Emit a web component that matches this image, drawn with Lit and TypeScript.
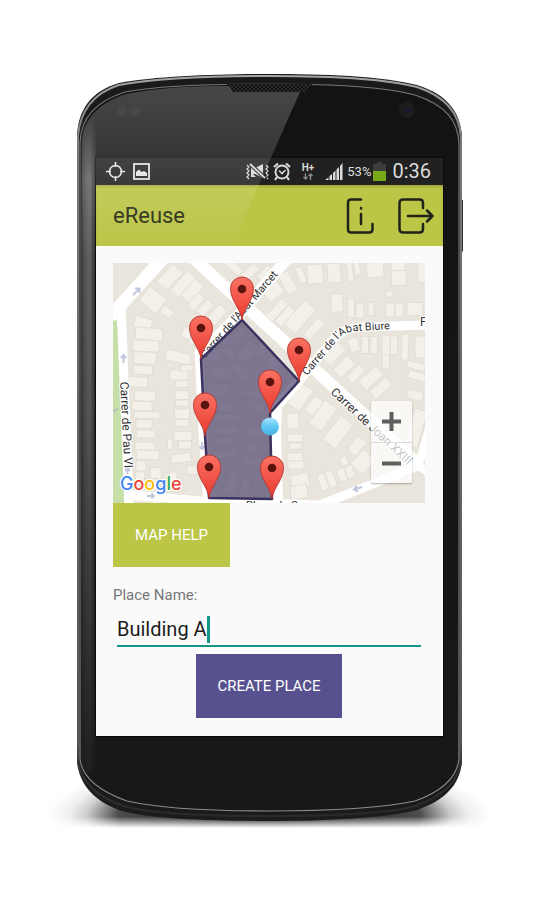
import { LitElement, html, css, svg } from "lit";
import { customElement, state } from "lit/decorators.js";

// x, y, width, height, rotation in degrees; centre based
type Lot = [number, number, number, number, number];

const LOTS: Lot[] = [
  [170, 277, 14, 24, 42], [183, 284, 11, 26, 42], [192, 291, 12, 22, 42], [153, 300, 22, 18, 38], [167, 312, 12, 8, 38],
  [196, 302, 9, 17, 42], [205, 308, 9, 16, 42], [216, 316, 11, 22, 42], [188, 334, 13, 11, 22], [196, 341, 13, 9, 22],
  [143, 323, 18, 11, 15], [149, 334, 27, 12, 6], [146, 346, 26, 11, 2], [145, 358, 22, 12, 2], [143, 370, 19, 9, 2],
  [178, 357, 25, 11, 12], [179, 375, 18, 10, 0], [182, 384, 12, 7, 0], [187, 368, 12, 6, 0], [138, 382, 19, 10, 2],
  [145, 396, 21, 10, 2], [142, 406, 20, 9, 2], [147, 415, 26, 7, 2], [144, 424, 16, 9, 2], [146, 434, 19, 8, 2],
  [145, 446, 20, 8, 2], [148, 455, 23, 9, 2], [141, 466, 10, 10, 0], [156, 473, 11, 11, 0], [140, 476, 9, 8, 0],
  [182, 395, 14, 9, 0], [182, 403, 13, 6, 0], [182, 414, 15, 10, 0], [182, 423, 14, 7, 0], [183, 436, 18, 9, 0],
  [185, 445, 13, 8, 0], [170, 444, 5, 10, 0], [181, 458, 20, 9, -8], [173, 477, 8, 10, 0], [192, 470, 10, 8, 0],
  [228, 340, 14, 12, 42], [240, 335, 10, 12, 42], [215, 355, 16, 12, 0], [230, 353, 15, 11, 42], [247, 352, 12, 22, 42],
  [221, 373, 22, 12, 0], [241, 371, 20, 10, 42], [218, 390, 20, 12, 0], [223, 407, 20, 9, 5], [228, 418, 24, 9, 0],
  [227, 430, 22, 8, 0], [224, 442, 18, 8, 0], [226, 454, 22, 9, 0], [251, 394, 18, 9, 25], [255, 406, 20, 8, 20],
  [252, 432, 18, 8, 0], [252, 448, 16, 8, 0], [253, 461, 18, 9, 0], [232, 483, 10, 20, 12], [245, 487, 9, 18, 12],
  [275, 362, 15, 16, 42], [262, 350, 9, 15, 42],
  [273, 291, 18, 15, -42], [288, 283, 11, 22, -28], [301, 275, 7, 17, -22], [315, 274, 16, 19, -4], [334, 273, 13, 19, -5],
  [350, 272, 6, 20, -8], [357, 268, 6, 14, -8], [375, 270, 17, 15, -5], [398, 266, 14, 9, 0], [399, 278, 15, 15, 0],
  [422, 272, 8, 20, 0], [277, 310, 9, 24, 42], [285, 316, 9, 22, 42], [300, 317, 15, 31, 42], [314, 329, 9, 22, 42],
  [337, 303, 12, 18, 0], [351, 308, 7, 19, 0], [360, 311, 8, 14, 0], [371, 309, 6, 13, 0], [389, 294, 7, 6, 0],
  [390, 310, 9, 14, 0], [399, 310, 8, 14, 0], [415, 309, 16, 13, 0],
  [354, 345, 10, 14, -20], [365, 345, 7, 17, 0], [374, 345, 7, 17, 0], [386, 345, 8, 20, 0], [394, 345, 7, 18, 0],
  [405, 347, 7, 26, 2], [420, 347, 10, 22, 0], [386, 362, 7, 14, 0], [333, 353, 22, 14, -45], [344, 367, 20, 12, -45],
  [356, 374, 18, 9, -45], [371, 378, 24, 12, -42], [381, 388, 22, 10, -42], [416, 366, 18, 7, 15], [417, 376, 18, 8, 15],
  [300, 397, 15, 25, 35], [314, 406, 11, 18, 35], [323, 416, 15, 28, 35], [338, 432, 16, 30, 38], [357, 446, 11, 18, 38],
  [363, 462, 16, 20, 42], [293, 421, 12, 16, 0], [295, 438, 16, 8, 0], [296, 446, 12, 6, 0], [295, 457, 16, 8, 0],
  [296, 465, 16, 8, 0], [300, 481, 18, 14, -15], [299, 492, 17, 14, -10], [323, 482, 8, 17, -20], [331, 479, 8, 17, -20],
  [342, 475, 8, 13, -20], [350, 472, 8, 13, -20], [344, 461, 7, 9, -20], [415, 395, 16, 9, 15], [416, 428, 13, 38, 15],
  [147, 501, 30, 4, 4], [232, 265, 24, 8, 42], [250, 272, 18, 9, -40], [266, 274, 10, 16, 42],
];

const PINS: [number, number][] = [
  [242, 320], [201, 359], [299, 381], [270, 413], [205, 436], [209, 498], [272, 499],
];

const ROADS: [string, number][] = [
  ["M110 317L166 255", 13],
  ["M121 304L129 506", 9],
  ["M190 255L420 466", 12],
  ["M198 356L239 315L288 258", 11],
  ["M296 385L330 343Q342 328 362 327L428 325", 9],
  ["M199 350L203 430L208 505", 9],
  ["M296 384L277 406L276 430L278 506", 10],
  ["M124 494L200 501L320 505L418 466", 9],
  ["M418 467L430 425", 8],
  ["M416 464L430 474", 8],
];

const OUTER =
  "M0 62C1 36 14 17 42 9C80 2 140 0 192 0C245 0 305 2 340 11C372 21 384 40 385 64L385 688C383 712 368 727 340 737C310 745 250 748 192 748C134 748 75 746 45 738C18 729 2 712 0 688Z";
const GLASS =
  "M3 68C4 44 20 27 48 18C85 11 140 10 192 10C250 10 305 12 338 21C368 31 381 46 382 70L382 686C380 704 366 718 338 728C300 736 250 738 192 738C134 738 85 736 50 728C22 718 5 704 3 686Z";

@customElement("area-map")
class AreaMap extends LitElement {
  static styles = css`
    :host { display: block; position: relative; height: 240px; overflow: hidden; background: #e9e5dc; }
    .canvas { display: block; width: 100%; height: 100%; }
    .street { font: 12px Roboto, sans-serif; fill: #333; stroke: #fff; stroke-width: 2px; paint-order: stroke; stroke-linejoin: round; }
    .narrow { font-size: 11px; }
    .brand { font: 500 18px Inter, sans-serif; stroke: #fff; stroke-width: 2px; paint-order: stroke; }
    .zoom { position: absolute; right: 13px; bottom: 20px; width: 41px; display: grid; border-radius: 2px;
      background: rgba(255, 255, 255, 0.72); box-shadow: 0 1px 2px rgba(0, 0, 0, 0.3); }
    .step { height: 41px; padding: 0; border: 0; background: none; display: grid; place-items: center; }
    .step + .step { border-top: 1px solid #dedbd6; }
  `;

  render() {
    return html`
      <svg class="canvas" viewBox="113 263 312 240" preserveAspectRatio="xMidYMid slice" role="img" aria-label="Map">
        <defs>
          <linearGradient id="red" x1="0" y1="0" x2="0" y2="1">
            <stop offset="0" stop-color="#fb7264" /><stop offset="1" stop-color="#e9392e" />
          </linearGradient>
          <linearGradient id="dot" x1="0" y1="0" x2="0" y2="1">
            <stop offset="0" stop-color="#a5e4ff" /><stop offset=".5" stop-color="#5fc8f5" /><stop offset="1" stop-color="#48afe0" />
          </linearGradient>
          <path id="biure" d="M307 376L336 342Q344 331 358 331L430 327" />
        </defs>
        <path d="M110 306L117 311L125 510H110Z" fill="#c6dfa9" />
        <path d="M112 412L118 409" stroke="#bbb" stroke-width="2" />
        ${LOTS.map(([x, y, w, h, r]) => svg`<rect x=${x - w / 2} y=${y - h / 2} width=${w} height=${h}
          transform="rotate(${r} ${x} ${y})" fill="#f3f0e9" stroke="#e0dcd3" stroke-width=".8" />`)}
        ${ROADS.map(([d, w]) => svg`<path d=${d} fill="none" stroke="#fff" stroke-width=${w} stroke-linejoin="round" />`)}
        <g fill="none" stroke="#c3c7dc" stroke-width="2">
          <path d="M133 295L139 289M135 288.500H139.500V293" />
          <path d="M123.500 363V355M121 358L123.500 355L126 358" />
          <path d="M127.500 474V468M125 471L127.500 468L130 471" />
          <path d="M147 496H154M151.500 493.500L154 496L151.500 498.500" />
          <path d="M202 442V449M199.500 446.500L202 449L204.500 446.500" />
          <path d="M362 487L354 489.500M357 486L354 489.500L358 491.500" />
        </g>
        <text class="street narrow" transform="translate(205 359) rotate(-49)">Carrer de l'Abat Marcet</text>
        <text class="street narrow"><textPath href="#biure">Carrer de l'Abat Biure</textPath></text>
        <text class="street" x="420" y="326">F</text>
        <text class="street" transform="translate(120 382) rotate(87)">Carrer de Pau VI</text>
        <text class="street" transform="translate(330 393) rotate(43)">Carrer de Joan XXIII</text>
        <text class="street narrow" x="246" y="509">Plaça de Can</text>
        <path d="M242 320L299 381L270 413L272 499L209 498L205 436L201 359Z" fill="#4a4068" fill-opacity=".68"
          stroke="#3b335f" stroke-width="2.500" stroke-linejoin="round" />
        ${PINS.map(([x, y]) => svg`<g transform="translate(${x} ${y})">
          <path d="M0 0C-1.500 -12 -11.500 -19 -11.500 -31.500A11.500 11.500 0 0 1 11.500 -31.500C11.500 -19 1.500 -12 0 0Z"
            fill="url(#red)" stroke="#b5372f" stroke-width=".9" />
          <circle cy="-31" r="4.300" fill="#5a1410" /></g>`)}
        <circle cx="270" cy="426.500" r="9" fill="url(#dot)" />
        <text class="brand" x="120" y="490"><tspan fill="#4285f4">G</tspan><tspan fill="#ea4335">o</tspan><tspan
          fill="#fbbc05">o</tspan><tspan fill="#4285f4">g</tspan><tspan fill="#34a853">l</tspan><tspan fill="#ea4335">e</tspan></text>
      </svg>
      <div class="zoom">
        <button class="step" aria-label="Zoom in">
          <svg width="19" height="19"><path d="M9.500 0V19M0 9.500H19" stroke="#5f5f5f" stroke-width="4" /></svg>
        </button>
        <button class="step" aria-label="Zoom out">
          <svg width="19" height="19"><path d="M0 9.500H19" stroke="#5f5f5f" stroke-width="4" /></svg>
        </button>
      </div>
    `;
  }
}

@customElement("status-bar")
class StatusBar extends LitElement {
  static styles = css`
    :host { display: flex; align-items: center; height: 27px; padding: 0 12px 0 10px; background: rgba(34, 34, 34, 0.8); color: #dcdcdc; font-family: Roboto, sans-serif; }
    svg { display: block; flex: none; }
    .group { display: flex; align-items: center; gap: 8px; }
    .end { margin-left: auto; gap: 4px; }
    .power { display: flex; align-items: center; gap: 2px; font-size: 13px; }
    .clock { padding-left: 2px; font-size: 20px; line-height: 27px; }
  `;

  render() {
    return html`
      <div class="group">
        <svg width="19" height="19" fill="none" stroke="#e4e4e4" stroke-width="1.600">
          <circle cx="9.500" cy="9.500" r="6" /><path d="M9.500 0V5M9.500 14V19M0 9.500H5M14 9.500H19" />
        </svg>
        <svg width="17" height="17" fill="none" stroke="#e4e4e4" stroke-width="1.800">
          <rect x="1" y="1" width="15" height="15" /><path d="M3 13V9L6 6.500L8.500 9L11 8L14 10V13Z" fill="#e4e4e4" stroke="none" />
        </svg>
      </div>
      <div class="group end">
        <svg width="23" height="17" fill="none" stroke="#d8d8d8" stroke-width="1.200">
          <path d="M1 2L3 4L1 6L3 8L1 10L3 12L1 14L3 16M20 2L22 4L20 6L22 8L20 10L22 12L20 14L22 16" />
          <path d="M5 5H9L17 1V15L9 11H5Z" fill="#d8d8d8" stroke="none" />
          <path d="M4 1L20 16" stroke="#242424" stroke-width="4" /><path d="M4 1L19 15" stroke-width="1.800" />
          <path d="M5 9V14H10Z" fill="#d8d8d8" stroke="none" />
        </svg>
        <svg width="18" height="19" fill="none" stroke="#d8d8d8" stroke-width="2">
          <circle cx="9" cy="10" r="6.500" /><path d="M1 5L5 1.500M17 5L13 1.500M4 15L2 18M14 15L16 18" stroke-width="2.200" />
          <path d="M6 8.500L9 11.500L12.500 8" stroke-width="1.600" />
        </svg>
        <svg width="26" height="20">
          <text x="13" y="9" text-anchor="middle" font-family="Roboto, sans-serif" font-size="10" font-weight="700" fill="#d8d8d8">H+</text>
          <path d="M10.500 11.500V17M8.500 15L10.500 17L12.500 15M15.500 18V12.500M13.500 14L15.500 12L17.500 14" fill="none" stroke="#8a8a8a" stroke-width="1.400" />
        </svg>
        <svg width="18" height="18" fill="#dcdcdc">
          <path d="M0 17L3.500 14.500V17ZM4.500 17V13L7 11V17ZM8 17V10L10.500 7.500V17ZM11.500 17V6.500L14 4V17ZM15 17V3L17.500 0V17Z" />
        </svg>
        <div class="power">
          <span>53%</span>
          <svg width="13" height="19"><path d="M0 2H4V0H9V2H13V19H0Z" fill="#3c3c3c" /><path d="M0 9H13V19H0Z" fill="#78aa18" /></svg>
        </div>
        <span class="clock">0:36</span>
      </div>
    `;
  }
}

@customElement("app-root")
class AppRoot extends LitElement {
  static styles = css`
    :host { display: block; min-height: 100vh; box-sizing: border-box; padding: 74px 77px; background: #fff; font-family: Roboto, sans-serif; }
    .phone { position: relative; max-width: 480px; margin: 0 auto; padding: 84px 19px 86px; box-sizing: border-box; isolation: isolate; }
    .body, .sheen { position: absolute; inset: 0; width: 100%; height: 100%; overflow: visible; pointer-events: none; }
    .body { z-index: -1; }
    .bar { display: flex; align-items: center; gap: 24px; height: 61px; padding: 0 9px 0 17px; background: #bbc546; box-sizing: border-box;
      box-shadow: inset 0 2px 2px rgba(0, 0, 0, 0.12); }
    .title { flex: 1; margin: 0; font-size: 22px; font-weight: 400; color: #2c2e1a; }
    .tool { display: block; padding: 0; border: 0; background: none; }
    .tool svg { display: block; fill: none; stroke: #22231a; stroke-width: 2.5px; stroke-linecap: round; stroke-linejoin: round; }
    .page { display: flex; flex-direction: column; padding: 17px 18px 18px 17px; background: #fafafa; }
    .action { height: 64px; min-width: 117px; padding: 0 21px; border: 0; border-radius: 0; font: 15px Roboto, sans-serif; color: #fff; }
    .help { align-self: flex-start; background: #bbc546; }
    .create { align-self: center; margin-top: 7px; background: #57518f; }
    .label { margin-top: 18px; font-size: 15px; line-height: 20px; color: #777; }
    .field { display: flex; align-items: center; gap: 0; height: 32px; margin: 8px 4px 0; border-bottom: 2px solid #159588; }
    .name { field-sizing: content; min-width: 0; max-width: 100%; padding: 0; border: 0; outline: 0; background: none;
      font: 20px Roboto, sans-serif; color: #1c1c1c; caret-color: transparent; }
    .caret { width: 3px; height: 27px; background: #159588; }
  `;

  @state() private place = "Building A";

  render() {
    return html`
      <main class="phone">
        <svg class="body" viewBox="0 0 385 749" preserveAspectRatio="none" aria-hidden="true">
          <defs>
            <radialGradient id="shade">
              <stop offset="0" stop-color="#000" stop-opacity=".95" /><stop offset=".68" stop-color="#000" stop-opacity=".7" />
              <stop offset=".82" stop-color="#000" stop-opacity=".2" /><stop offset=".9" stop-color="#000" stop-opacity=".06" />
              <stop offset="1" stop-color="#000" stop-opacity="0" />
            </radialGradient>
            <linearGradient id="face" x1="0" y1="0" x2="0" y2="1">
              <stop offset="0" stop-color="#131313" /><stop offset="1" stop-color="#181818" />
            </linearGradient>
            <linearGradient id="rim" x1="0" y1="0" x2="0" y2="1">
              <stop offset="0" stop-color="#a5a5a5" /><stop offset=".1" stop-color="#777" /><stop offset=".9" stop-color="#555" />
              <stop offset=".93" stop-color="#333" /><stop offset="1" stop-color="#2a2a2a" />
            </linearGradient>
            <linearGradient id="lip" x1="0" y1="0" x2="0" y2="1">
              <stop offset="0" stop-color="#777" /><stop offset=".5" stop-color="#666" /><stop offset="1" stop-color="#8a8a8a" />
            </linearGradient>
            <linearGradient id="edge">
              <stop offset="0" stop-color="#3c3c3c" /><stop offset=".3" stop-color="#5c5c5c" /><stop offset=".6" stop-color="#686868" />
              <stop offset=".8" stop-color="#484848" /><stop offset="1" stop-color="#242424" />
            </linearGradient>
            <linearGradient id="fade" x1="0" y1="0" x2="0" y2="1">
              <stop offset="0" stop-color="#fff" stop-opacity="0" /><stop offset=".1" stop-color="#fff" />
              <stop offset=".45" stop-color="#fff" stop-opacity=".8" /><stop offset="1" stop-color="#fff" stop-opacity=".1" />
            </linearGradient>
            <mask id="down"><rect x="0" y="40" width="20" height="660" fill="url(#fade)" /></mask>
            <pattern id="mesh" width="4" height="4" patternUnits="userSpaceOnUse">
              <rect width="4" height="4" fill="#2b2b2b" /><rect width="2" height="2" fill="#111" /><rect x="2" y="2" width="2" height="2" fill="#111" />
            </pattern>
            <linearGradient id="floor" x1="0" y1="0" x2="0" y2="1">
              <stop offset="0" stop-color="#fff" /><stop offset=".88" stop-color="#fff" /><stop offset="1" stop-color="#fff" stop-opacity="0" />
            </linearGradient>
            <mask id="above" maskUnits="userSpaceOnUse" x="-60" y="660" width="505" height="95">
              <rect x="-60" y="660" width="505" height="95" fill="url(#floor)" />
            </mask>
          </defs>
          <ellipse cx="192" cy="744" rx="222" ry="60" fill="url(#shade)" mask="url(#above)" />
          <rect x="383" y="126" width="3" height="52" rx="1" fill="#333" />
          <path d=${OUTER} fill="#1c1c1c" />
          <path d="M1 62C3 38 16 19 42 11C80 4 140 2 192 2C245 2 305 4 340 13C370 23 383 42 384 64L384 688C382 708 366 723 338 733C310 741 250 743 192 743C134 743 75 741 47 733C20 724 3 708 1 688Z"
            fill="#1a1a1a" stroke="url(#rim)" stroke-width="2" />
          <path d=${GLASS} fill="url(#face)" stroke="url(#lip)" stroke-width="1.200" />
          <rect x="4" y="40" width="15" height="660" fill="url(#edge)" mask="url(#down)" />
          <path d="M149 9.500H236L229 18H156Z" fill="url(#mesh)" />
          <circle cx="330" cy="36" r="8" fill="#1d1d1d" /><circle cx="330" cy="36" r="3" fill="#191931" />
          <rect x="18" y="83" width="349" height="581" fill="#0b0b0b" />
          <rect x="19" y="84" width="347" height="27" fill="#1f1f1f" />
        </svg>
        <status-bar></status-bar>
        <header class="bar">
          <h1 class="title">eReuse</h1>
          <button class="tool" aria-label="Information">
            <svg width="28" height="36" viewBox="0 0 28 36">
              <path d="M15 1.500H5Q2 1.500 2 4.500V31.500Q2 34.500 5 34.500H23Q26.500 34.500 26.500 31.500V26M15 16V26M15 10V10.500" />
            </svg>
          </button>
          <button class="tool" aria-label="Sign out">
            <svg width="36" height="36" viewBox="0 0 36 36">
              <path d="M25 10V5Q25 1.500 21.500 1.500H5Q1.500 1.500 1.500 5V31Q1.500 34.500 5 34.500H21.500Q25 34.500 25 31V26M10 18H34M29 12.500L34.500 18L29 23.500" />
            </svg>
          </button>
        </header>
        <section class="page">
          <area-map></area-map>
          <button class="action help">MAP HELP</button>
          <label class="label" for="place">Place Name:</label>
          <div class="field">
            <input class="name" id="place" type="text" .value=${this.place}
              @input=${(e: Event) => (this.place = (e.target as HTMLInputElement).value)} />
            <span class="caret"></span>
          </div>
          <button class="action create">CREATE PLACE</button>
        </section>
        <svg class="sheen" viewBox="0 0 385 749" preserveAspectRatio="none" aria-hidden="true">
          <defs>
            <linearGradient id="shine" x1="0" y1="0" x2="0" y2="1">
              <stop offset="0" stop-color="#fff" stop-opacity=".22" /><stop offset=".45" stop-color="#fff" stop-opacity=".14" />
              <stop offset="1" stop-color="#fff" stop-opacity="0" />
            </linearGradient>
          </defs>
          <path d="M5 68C6 46 21 29 49 20C85 13 120 12 152 12L156 18H223L150 183H5Z" fill="url(#shine)" />
          <circle cx="45" cy="37" r="5" fill="#555" opacity=".35" /><circle cx="58" cy="37" r="5" fill="#555" opacity=".35" />
        </svg>
      </main>
    `;
  }
}
